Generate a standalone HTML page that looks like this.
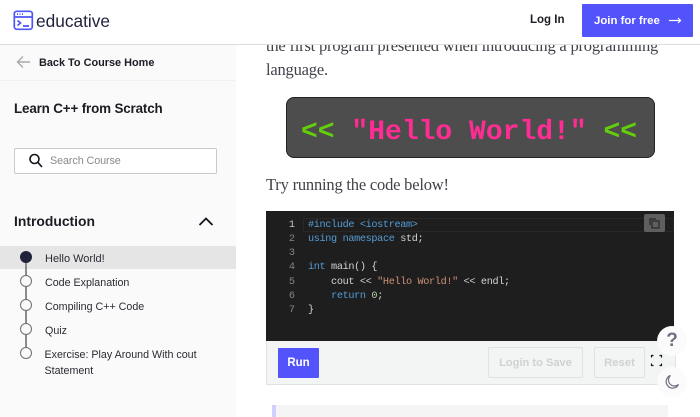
<!DOCTYPE html>
<html><head><meta charset="utf-8"><style>
html,body{margin:0;padding:0;background:#fff}
#p{position:relative;width:700px;height:417px;overflow:hidden;background:#fff;font-family:"Liberation Sans",sans-serif}
.a{position:absolute;white-space:nowrap}
.s{font-family:"Liberation Serif",serif;font-size:16.5px;color:#41434a;letter-spacing:-.2px}
.n{font-size:10.7px;color:#2a2b33;line-height:16px}
.c{position:absolute;left:308px;font-family:"Liberation Mono",monospace;font-size:10.2px;letter-spacing:-.35px;white-space:pre;line-height:14px;color:#d4d4d4}
.l{position:absolute;left:270px;width:25px;text-align:right;font-family:"Liberation Mono",monospace;font-size:10.2px;line-height:14px;color:#858585}
.k{color:#569cd6}.st{color:#ce9178}.g{color:#b5cea8}
.dot{position:absolute;left:20px;width:10px;height:10px;border:1px solid #6f7075;border-radius:50%;background:#fafafa}
</style></head><body><div id="p">
<!-- main text -->
<div class="a s" style="left:266px;top:36px;line-height:20px">the first program presented when introducing a programming</div>
<div class="a s" style="left:266px;top:60px;line-height:20px">language.</div>
<!-- header -->
<div class="a" style="left:0;top:0;width:700px;height:44px;background:#fff;border-bottom:1px solid #dcdcdc"></div>
<svg class="a" style="left:13px;top:10px" width="21" height="21" viewBox="0 0 21 21" fill="none" stroke="#4f55f5" stroke-width="1.7"><rect x="1.3" y="1.3" width="18" height="18" rx="2.5"/><path d="M1.5 7H19.5"/><path d="M4 4.2H5M6.5 4.2H7.5M9 4.2H10"/><path d="M4.5 10.5L7.5 13L4.5 15.5" /><path d="M10 16H16" stroke-width="1.8"/></svg>
<div class="a" style="left:36px;top:9px;font-size:17.3px;line-height:24px;color:#21233a;letter-spacing:0">educative</div>
<div class="a" style="left:530px;top:12px;font-size:11.5px;font-weight:bold;line-height:17px;color:#1c1c24;letter-spacing:0">Log In</div>
<div class="a" style="left:582px;top:4px;width:111px;height:33px;background:#5353fb;border-radius:1px"></div>
<div class="a" style="left:594px;top:12.5px;font-size:11.4px;font-weight:bold;line-height:17px;color:#fff;letter-spacing:0">Join for free</div>
<svg class="a" style="left:668px;top:16px" width="14" height="9" viewBox="0 0 14 9" fill="none" stroke="#fff" stroke-width="1.2"><path d="M1 4.5H12.5M10 2L12.5 4.5L10 7"/></svg>
<!-- sidebar -->
<div class="a" style="left:0;top:45px;width:236px;height:372px;background:#fafafa"></div>
<div class="a" style="left:0;top:80px;width:236px;height:1px;background:#f1f1f1"></div>
<svg class="a" style="left:16px;top:55px" width="15" height="14" viewBox="0 0 15 14" fill="none" stroke="#a9a9ab" stroke-width="1.4"><path d="M14 7H1.5M7 1.5L1.5 7L7 12.5"/></svg>
<div class="a" style="left:39px;top:54.5px;font-size:10.9px;font-weight:bold;line-height:17px;color:#1b1c24">Back To Course Home</div>
<div class="a" style="left:14px;top:99px;font-size:13.4px;font-weight:bold;line-height:20px;color:#1b1c24;letter-spacing:-.15px">Learn C++ from Scratch</div>
<div class="a" style="left:14px;top:148px;width:201px;height:24px;background:#fff;border:1px solid #c9c9c9;border-radius:2px"></div>
<svg class="a" style="left:28px;top:153px" width="15" height="15" viewBox="0 0 15 15" fill="none" stroke="#14141c" stroke-width="1.6"><circle cx="6.5" cy="6" r="4.5"/><path d="M9.8 9.3L14 14"/></svg>
<div class="a" style="left:50px;top:153px;font-size:10.8px;line-height:16px;color:#8b8b8f;letter-spacing:-.1px">Search Course</div>
<div class="a" style="left:14px;top:211px;font-size:13.9px;font-weight:bold;line-height:20px;color:#1b1c24;letter-spacing:0">Introduction</div>
<svg class="a" style="left:198px;top:216px" width="16" height="11" viewBox="0 0 16 11" fill="none" stroke="#14141c" stroke-width="1.8"><path d="M1.5 9L8 2.5L14.5 9"/></svg>
<div class="a" style="left:0;top:246px;width:236px;height:23px;background:#e5e5e5"></div>
<div class="a" style="left:25px;top:258px;width:1.5px;height:100px;background:#8a8b8f"></div>
<div class="a" style="left:20px;top:251px;width:12px;height:12px;background:#20223a;border-radius:50%"></div>
<div class="dot" style="top:275px"></div>
<div class="dot" style="top:299px"></div>
<div class="dot" style="top:323px"></div>
<div class="dot" style="left:19.5px;top:347px"></div>
<div class="a n" style="left:45px;top:251px;font-size:11px">Hello World!</div>
<div class="a n" style="left:45px;top:275px">Code Explanation</div>
<div class="a n" style="left:45px;top:299px">Compiling C++ Code</div>
<div class="a n" style="left:45px;top:323px">Quiz</div>
<div class="a n" style="left:44.5px;top:347px">Exercise: Play Around With cout</div>
<div class="a n" style="left:44.5px;top:363px">Statement</div>
<!-- banner -->
<div class="a" style="left:286px;top:97px;width:367px;height:59px;background:#4d4d4d;border:1px solid #222;border-radius:8px"></div>
<div class="a" style="left:301px;top:118px;font-family:'Liberation Mono',monospace;font-weight:bold;font-size:28px;line-height:30px;white-space:pre;color:#ff2d93"><span style="color:#63cf0a">&lt;&lt;</span> "Hello World!" <span style="color:#63cf0a">&lt;&lt;</span></div>
<div class="a s" style="left:266px;top:175px;line-height:20px">Try running the code below!</div>
<!-- code -->
<div class="a" style="left:266px;top:211px;width:408px;height:130px;background:#1e1e1e"></div>
<div class="a" style="left:303px;top:218px;width:371px;height:14px;box-sizing:border-box;border:1px solid #282828"></div>
<div class="l" style="top:219px;color:#c6c6c6">1</div>
<div class="l" style="top:233px">2</div>
<div class="l" style="top:247px">3</div>
<div class="l" style="top:261px">4</div>
<div class="l" style="top:276px">5</div>
<div class="l" style="top:290px">6</div>
<div class="l" style="top:304px">7</div>
<div class="c" style="top:219px"><span class="k">#include</span> <span class="st" style="color:#569cd6">&lt;iostream&gt;</span></div>
<div class="c" style="top:233px"><span class="k">using</span> <span class="k">namespace</span> std;</div>
<div class="c" style="top:261px"><span class="k">int</span> main() {</div>
<div class="c" style="top:276px">    cout &lt;&lt; <span class="st">"Hello World!"</span> &lt;&lt; endl;</div>
<div class="c" style="top:290px">    <span class="k">return</span> <span class="g">0</span>;</div>
<div class="c" style="top:304px">}</div>
<div class="a" style="left:644px;top:214px;width:21px;height:18px;background:#5f5f5f;border-radius:2px"></div>
<svg class="a" style="left:649px;top:218px" width="11" height="11" viewBox="0 0 11 11" fill="none" stroke="#1c1c1c" stroke-width="1"><path d="M1 7V1H7"/><rect x="3" y="3" width="7" height="7"/></svg>
<!-- footer -->
<div class="a" style="left:266px;top:341px;width:408px;height:43px;background:#f3f4f4;border:1px solid #e2e2e2;border-top:0"></div>
<div class="a" style="left:278px;top:348px;width:41px;height:30px;background:#5353fb;border-radius:1px"></div>
<div class="a" style="left:278px;top:355px;width:41px;text-align:center;font-size:11.5px;font-weight:bold;line-height:17px;color:#fff">Run</div>
<div class="a" style="left:488px;top:347px;width:93px;height:29px;border:1px solid #e1e1e1;border-radius:2px"></div>
<div class="a" style="left:488px;top:355px;width:95px;text-align:center;font-size:11.1px;font-weight:bold;line-height:17px;color:#d0d1d1;letter-spacing:0">Login to Save</div>
<div class="a" style="left:594px;top:347px;width:49px;height:29px;border:1px solid #e1e1e1;border-radius:2px"></div>
<div class="a" style="left:594px;top:355px;width:51px;text-align:center;font-size:11.3px;font-weight:bold;line-height:17px;color:#d0d1d1;letter-spacing:0">Reset</div>
<!-- callout -->
<div class="a" style="left:272px;top:405px;width:396px;height:12px;background:#f5f5f5"></div>
<div class="a" style="left:272px;top:405px;width:4px;height:12px;background:#cfd0fb"></div>
<!-- floating buttons -->
<div class="a" style="left:657px;top:326px;width:30px;height:30px;background:#fbfbfb;border-radius:50%"></div>
<div class="a" style="left:657px;top:328px;width:30px;text-align:center;font-size:19px;font-weight:bold;line-height:25px;color:#6f7180">?</div>
<svg class="a" style="left:650px;top:354px" width="13" height="13" viewBox="0 0 13 13" fill="none" stroke="#14141c" stroke-width="1.2"><path d="M1.5 3.5V1.5H3.5M9.5 1.5H11.5V3.5M11.5 9.5V11.5H9.5M3.5 11.5H1.5V9.5"/></svg>
<div class="a" style="left:657px;top:367px;width:30px;height:30px;background:#fbfbfb;border-radius:50%"></div>
<svg class="a" style="left:664px;top:374px" width="16" height="16" viewBox="0 0 16 16" fill="none" stroke="#6f7180" stroke-width="1.2"><path d="M6.5 1.5A6.5 6.5 0 1 0 14.5 10.5A6 6 0 0 1 6.5 1.5Z"/></svg>
</div></body></html>
